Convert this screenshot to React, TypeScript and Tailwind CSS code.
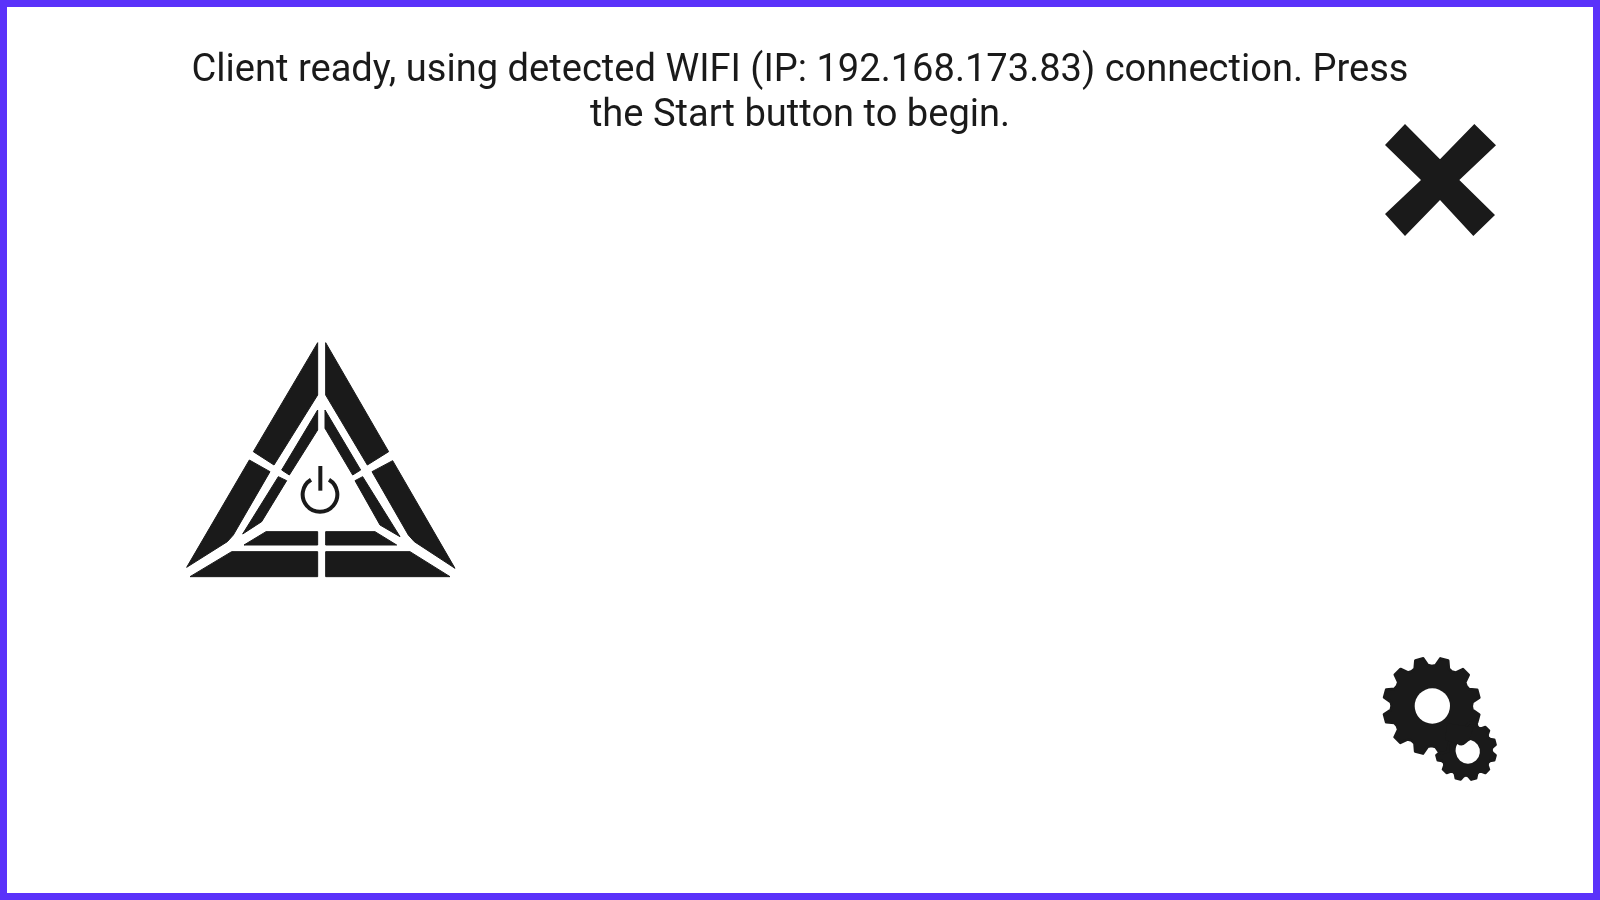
function gearPath(cx: number, cy: number, tip: number, root: number, teeth: number, start: number) {
  const step = (Math.PI * 2) / teeth;
  const pts: string[] = [];
  for (let i = 0; i < teeth; i++) {
    const a = start + i * step;
    const offs: [number, number][] = [
      [-0.5, root],
      [-0.32, root + 3],
      [-0.16, tip],
      [0.16, tip],
      [0.32, root + 3],
    ];
    for (const [o, r] of offs) {
      const t = a + o * step;
      pts.push(`${(cx + r * Math.cos(t)).toFixed(1)} ${(cy + r * Math.sin(t)).toFixed(1)}`);
    }
  }
  return "M" + pts.join("L") + "Z";
}

function Logo() {
  const shapes = [
    "443,38 443,195 312,405 250,365",
    "467,38 467,195 592,405 656,365",
    "238,390 300,425 190,615 172,635 50,712",
    "668,392 606,425 715,615 733,635 855,715",
    "185,665 443,665 443,740 60,740",
    "467,665 720,665 840,740 467,740",
    "443,240 443,300 358,435 335,420",
    "465,240 465,295 548,435 572,420",
    "325,440 350,452 275,575 218,612",
    "578,440 555,452 630,585 690,620",
    "288,605 443,605 443,645 222,645",
    "467,605 615,605 680,645 467,645",
  ];
  return (
    <svg viewBox="0 0 900 780" className="h-[260px] w-[300px] blur-[0.7px]">
      {shapes.map((s) => (
        <polygon key={s} points={s} fill="#1a1a1a" stroke="#1a1a1a" strokeWidth="3" strokeLinejoin="round" />
      ))}
      <path d="M423 449A52 52 0 1 0 477 449" fill="none" stroke="#1a1a1a" strokeWidth="12" />
      <path d="M451 408V482" fill="none" stroke="#1a1a1a" strokeWidth="12" />
    </svg>
  );
}

function CloseIcon() {
  return (
    <svg viewBox="0 0 480 420" className="h-[140px] w-[160px] blur-[0.7px]">
      <polygon
        points="135,42 240,148 343,42 408,106 298,210 405,315 340,378 240,270 135,378 75,312 183,210 75,105"
        className="fill-[#1a1a1a]"
      />
    </svg>
  );
}

function GearIcon() {
  return (
    <svg viewBox="0 0 480 450" className="h-[150px] w-[160px] blur-[0.7px]">
      <path d={gearPath(318, 330, 90, 76, 12, -0.26)} fill="#1a1a1a" stroke="#1a1a1a" strokeWidth="8" strokeLinejoin="round" />
      <path d={gearPath(215, 198, 145, 120, 12, -1.83)} fill="#1a1a1a" stroke="#1a1a1a" strokeWidth="8" strokeLinejoin="round" />
      <path d="M262 250L340 262L320 320L255 300Z" fill="#1a1a1a" />
      <circle cx="217" cy="198" r="53" className="fill-white" />
      <path
        d="M292 312Q305 322 318 310Q325 303 332 300A36 36 0 1 1 288 340Q284 325 292 312Z"
        className="fill-white"
      />
    </svg>
  );
}

export default function App() {
  return (
    <div className="flex h-screen w-screen flex-col border-[7px] border-[#5a32fa] bg-white font-['Roboto',sans-serif] text-[#1a1a1a]">
      <p className="mx-auto w-[1240px] pt-[39px] text-center text-[38.1px] leading-[45px] blur-[0.4px]">
        Client ready, using detected WIFI (IP: 192.168.173.83) connection. Press the Start button to begin.
      </p>
      <div className="-mt-[26px] flex flex-1 justify-between pb-[103px] pl-[163px] pr-[73px]">
        <button className="mt-[220px] self-start">
          <Logo />
        </button>
        <div className="flex flex-col justify-between">
          <CloseIcon />
          <GearIcon />
        </div>
      </div>
    </div>
  );
}
